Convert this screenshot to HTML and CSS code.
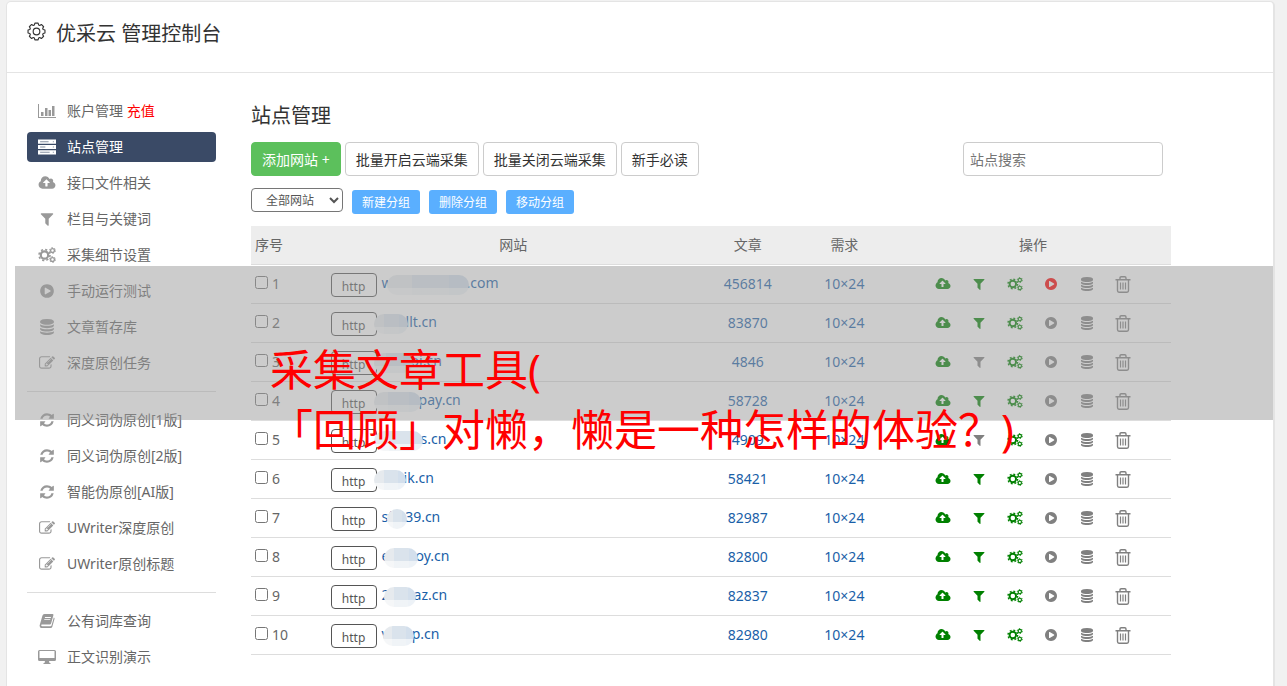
FILE: index.html
```html
<!DOCTYPE html>
<html lang="zh-CN">
<head>
    <meta charset="UTF-8">
    <meta name="viewport" content="width=device-width, initial-scale=1.0">
    <title>优采云 管理控制台</title>
    <link rel="stylesheet" href="styles.css">
</head>
<body>
    <!-- icon sprite -->
    <svg class="sprite" aria-hidden="true">
        <symbol id="i-gear" viewBox="0 0 20 20">
            <path fill="none" stroke="currentColor" stroke-width="1.2" stroke-linejoin="round" d="M8.3 1.2h3.4l.5 1.9 1.2.5 1.7-1 2.4 2.4-1 1.7.5 1.2 1.9.5v3.2l-1.9.5-.5 1.2 1 1.7-2.4 2.4-1.7-1-1.2.5-.5 1.9H8.3l-.5-1.9-1.2-.5-1.7 1L2.500 15l1-1.700-.5-1.200-1.900-.5V8.400l1.900-.5.5-1.200-1-1.700L4.900 2.600l1.700 1 1.200-.5z"/>
            <circle cx="10" cy="10" r="3.500" fill="none" stroke="currentColor" stroke-width="1.200"/>
        </symbol>
        <symbol id="i-chart" viewBox="0 0 18 16">
            <path d="M0 1h1v13h17v1H0zM3 9h2.500v4H3zM7 5h2.500v8H7zM10.500 7H13v6h-2.500zM14 3h2.500v10H14z"/>
        </symbol>
        <symbol id="i-server" viewBox="0 0 17 14">
            <path d="M0 0h17v4H0zM0 5h17v4H0zM0 10h17v4H0z"/>
            <path fill="#3a4a66" opacity=".6" d="M2 1.500h8v1H2zM2 6.500h5v1H2zM2 11.500h9v1H2zM14 1.500h1v1h-1zM14 6.500h1v1h-1zM14 11.500h1v1h-1z"/>
        </symbol>
        <symbol id="i-cloud" viewBox="0 0 2048 1792">
            <path d="M1344 864q0-14-9-23l-352-352q-9-9-23-9t-23 9l-351 351q-10 12-10 24 0 14 9 23t23 9h224v352q0 13 9.500 22.500t22.500 9.500h192q13 0 22.500-9.500t9.500-22.500v-352h224q13 0 22.500-9.500t9.500-22.500zm640 288q0 159-112.500 271.500t-271.500 112.500h-1088q-185 0-316.500-131.500t-131.500-316.500q0-130 70-240t188-165q-2-30-2-43 0-212 150-362t362-150q156 0 285.500 87t188.500 231q71-62 166-62 106 0 181 75t75 181q0 76-41 138 130 31 213.500 135.500t83.500 238.500z"/>
        </symbol>
        <symbol id="i-filter" viewBox="0 0 1792 1792">
            <path d="M1595 295q17 41-14 70l-493 493v742q0 42-39 59-13 5-25 5-27 0-45-19l-256-256q-19-19-19-45v-486l-493-493q-31-29-14-70 17-39 59-39h1280q42 0 59 39z"/>
        </symbol>
        <symbol id="i-cogs" viewBox="0 0 18 16">
            <g fill="none" stroke="currentColor">
                <circle cx="6.500" cy="8" r="3.700" stroke-width="2.200"/>
                <circle cx="6.500" cy="8" r="5.500" stroke-width="1.600" stroke-dasharray="2.160 2.160"/>
                <circle cx="14.500" cy="3.500" r="1.900" stroke-width="1.300"/>
                <circle cx="14.500" cy="3.500" r="2.900" stroke-width="1" stroke-dasharray="1.520 1.520"/>
                <circle cx="14.500" cy="12.500" r="1.900" stroke-width="1.300"/>
                <circle cx="14.500" cy="12.500" r="2.900" stroke-width="1" stroke-dasharray="1.520 1.520"/>
            </g>
        </symbol>
        <symbol id="i-play" viewBox="0 0 1792 1792">
            <path d="M896 128q209 0 385.500 103t279.500 279.500 103 385.500-103 385.500-279.500 279.500-385.500 103-385.500-103-279.500-279.500-103-385.500 103-385.500 279.500-279.500 385.500-103zm384 823q32-18 32-55t-32-55l-544-320q-31-19-64-1-32 19-32 56v640q0 37 32 56 16 8 32 8 17 0 32-9z"/>
        </symbol>
        <symbol id="i-db" viewBox="0 0 1792 1792">
            <path d="M896 768q237 0 443-43t325-127v170q0 69-103 128t-280 93.500-385 34.500-385-34.500-280-93.500-103-128v-170q119 84 325 127t443 43zm0 768q237 0 443-43t325-127v170q0 69-103 128t-280 93.500-385 34.500-385-34.500-280-93.500-103-128v-170q119 84 325 127t443 43zm0-384q237 0 443-43t325-127v170q0 69-103 128t-280 93.500-385 34.500-385-34.500-280-93.500-103-128v-170q119 84 325 127t443 43zm0-1152q208 0 385 34.500t280 93.500 103 128v128q0 69-103 128t-280 93.500-385 34.500-385-34.500-280-93.500-103-128v-128q0-69 103-128t280-93.500 385-34.500z"/>
        </symbol>
        <symbol id="i-edit" viewBox="0 0 1792 1792">
            <path d="M888 1184l116-116-152-152-116 116v56h96v96h56zm440-720q-16-16-33 1l-350 350q-17 17-1 33t33-1l350-350q17-17 1-33zm80 594v190q0 119-84.500 203.500t-203.500 84.500h-832q-119 0-203.500-84.500t-84.500-203.500v-832q0-119 84.500-203.500t203.500-84.500h832q63 0 117 25 15 7 18 23 3 17-9 29l-49 49q-14 14-32 8-23-6-45-6h-832q-66 0-113 47t-47 113v832q0 66 47 113t113 47h832q66 0 113-47t47-113v-126q0-13 9-22l64-64q15-15 35-7t20 29zm-96-738l288 288-672 672h-288v-288zm444 132l-92 92-288-288 92-92q28-28 68-28t68 28l152 152q28 28 28 68t-28 68z"/>
        </symbol>
        <symbol id="i-refresh" viewBox="0 0 1792 1792">
            <path d="M1639 1056q0 5-1 7-64 268-268 434.500t-478 166.500q-146 0-282.500-55t-243.500-157l-129 129q-19 19-45 19t-45-19-19-45v-448q0-26 19-45t45-19h448q26 0 45 19t19 45-19 45l-137 137q71 66 161 102t187 36q134 0 250-65t186-179q11-17 53-117 8-23 30-23h192q13 0 22.500 9.500t9.500 22.500zm25-800v448q0 26-19 45t-45 19h-448q-26 0-45-19t-19-45 19-45l138-138q-148-137-349-137-134 0-250 65t-186 179q-11 17-53 117-8 23-30 23h-199q-13 0-22.500-9.500t-9.500-22.500v-7q65-268 270-434.500t480-166.500q146 0 284 55.500t245 156.500l130-129q19-19 45-19t45 19 19 45z"/>
        </symbol>
        <symbol id="i-book" viewBox="0 0 16 16">
            <path d="M5.500 1h8q1.200 0 .9 1.200l-2.300 8.300q-.3 1-1.400 1H2.500q-.8 1.800.5 1.800h8.500q.7 0 1-.8l2.300-8q1 .3.7 1.400l-2.200 7.800q-.4 1.300-1.700 1.300H2.500Q.5 15 .6 12.500L3.400 2.700Q3.800 1 5.500 1zM6 4l-.2.900h6L12 4zm-.6 2.200-.3.900h6l.3-.9z"/>
        </symbol>
        <symbol id="i-desktop" viewBox="0 0 18 16">
            <path d="M1.500 1h15Q18 1 18 2.500v8q0 1.500-1.500 1.500H11l.5 2h1v1h-7v-1h1l.5-2H1.500Q0 12 0 10.500v-8Q0 1 1.500 1zm0 1v7h15V2z"/>
        </symbol>
        <symbol id="i-trash" viewBox="0 0 16 17">
            <path fill="none" stroke="currentColor" stroke-width="1.400" d="M.5 3.700h15M5 3.500V2q0-1.200 1.200-1.200h3.600Q11 .8 11 2v1.500M2.500 4v10.500q0 1.700 1.500 1.700h8q1.500 0 1.500-1.700V4"/>
            <path fill="none" stroke="currentColor" stroke-width="1.200" d="M5.500 6.500v7M8 6.500v7M10.500 6.500v7"/>
        </symbol>
    </svg>

    <div class="panel">
        <header class="top">
            <svg class="top-icon"><use href="#i-gear"/></svg>
            <h1>优采云 管理控制台</h1>
        </header>

        <div class="main">
            <nav class="sidebar">
                <ul>
                    <li><a href="#"><svg><use href="#i-chart"/></svg><span>账户管理 <em>充值</em></span></a></li>
                    <li><a href="#" class="active"><svg><use href="#i-server"/></svg><span>站点管理</span></a></li>
                    <li><a href="#"><svg><use href="#i-cloud"/></svg><span>接口文件相关</span></a></li>
                    <li><a href="#"><svg><use href="#i-filter"/></svg><span>栏目与关键词</span></a></li>
                    <li><a href="#"><svg><use href="#i-cogs"/></svg><span>采集细节设置</span></a></li>
                    <li><a href="#"><svg><use href="#i-play"/></svg><span>手动运行测试</span></a></li>
                    <li><a href="#"><svg><use href="#i-db"/></svg><span>文章暂存库</span></a></li>
                    <li><a href="#"><svg><use href="#i-edit"/></svg><span>深度原创任务</span></a></li>
                </ul>
                <hr>
                <ul>
                    <li><a href="#"><svg><use href="#i-refresh"/></svg><span>同义词伪原创[1版]</span></a></li>
                    <li><a href="#"><svg><use href="#i-refresh"/></svg><span>同义词伪原创[2版]</span></a></li>
                    <li><a href="#"><svg><use href="#i-refresh"/></svg><span>智能伪原创[AI版]</span></a></li>
                    <li><a href="#"><svg><use href="#i-edit"/></svg><span>UWriter深度原创</span></a></li>
                    <li><a href="#"><svg><use href="#i-edit"/></svg><span>UWriter原创标题</span></a></li>
                </ul>
                <hr>
                <ul>
                    <li><a href="#"><svg><use href="#i-book"/></svg><span>公有词库查询</span></a></li>
                    <li><a href="#"><svg><use href="#i-desktop"/></svg><span>正文识别演示</span></a></li>
                </ul>
            </nav>

            <section class="content">
                <h2>站点管理</h2>
                <div class="toolbar">
                    <button class="btn btn-add">添加网站 +</button>
                    <button class="btn">批量开启云端采集</button>
                    <button class="btn">批量关闭云端采集</button>
                    <button class="btn">新手必读</button>
                    <input class="search" type="text" placeholder="站点搜索" aria-label="站点搜索">
                </div>
                <div class="groups">
                    <select aria-label="网站分组">
                        <option>全部网站</option>
                    </select>
                    <button class="btn-sm">新建分组</button>
                    <button class="btn-sm">删除分组</button>
                    <button class="btn-sm">移动分组</button>
                </div>

                <table class="sites">
                    <colgroup>
                        <col class="c-no"><col class="c-site"><col class="c-art"><col class="c-need"><col class="c-ops">
                    </colgroup>
                    <thead>
                        <tr><th class="left">序号</th><th>网站</th><th>文章</th><th>需求</th><th>操作</th></tr>
                    </thead>
                    <tbody>
                        <tr>
                            <td><label class="no"><input type="checkbox">1</label></td>
                            <td><div class="site"><span class="http">http</span><a href="#">w<i class="mask" style="width:82px"></i>.com</a></div></td>
                            <td class="num">456814</td><td class="num">10×24</td>
                            <td><div class="ops"><button class="on" aria-label="接口"><svg><use href="#i-cloud"/></svg></button><button class="on" aria-label="关键词"><svg><use href="#i-filter"/></svg></button><button class="on" aria-label="设置"><svg><use href="#i-cogs"/></svg></button><button class="run" aria-label="运行"><svg><use href="#i-play"/></svg></button><button aria-label="暂存库"><svg><use href="#i-db"/></svg></button><button class="del" aria-label="删除"><svg><use href="#i-trash"/></svg></button></div></td>
                        </tr>
                        <tr>
                            <td><label class="no"><input type="checkbox">2</label></td>
                            <td><div class="site"><span class="http">http</span><a href="#"><i class="mask start" style="width:34px"></i>llt.cn</a></div></td>
                            <td class="num">83870</td><td class="num">10×24</td>
                            <td><div class="ops"><button class="on" aria-label="接口"><svg><use href="#i-cloud"/></svg></button><button class="on" aria-label="关键词"><svg><use href="#i-filter"/></svg></button><button class="on" aria-label="设置"><svg><use href="#i-cogs"/></svg></button><button aria-label="运行"><svg><use href="#i-play"/></svg></button><button aria-label="暂存库"><svg><use href="#i-db"/></svg></button><button class="del" aria-label="删除"><svg><use href="#i-trash"/></svg></button></div></td>
                        </tr>
                        <tr>
                            <td><label class="no"><input type="checkbox">3</label></td>
                            <td><div class="site"><span class="http">http</span><a href="#"><i class="mask start" style="width:39px"></i>oi.cn</a></div></td>
                            <td class="num">4846</td><td class="num">10×24</td>
                            <td><div class="ops"><button class="on" aria-label="接口"><svg><use href="#i-cloud"/></svg></button><button aria-label="关键词"><svg><use href="#i-filter"/></svg></button><button class="on" aria-label="设置"><svg><use href="#i-cogs"/></svg></button><button aria-label="运行"><svg><use href="#i-play"/></svg></button><button aria-label="暂存库"><svg><use href="#i-db"/></svg></button><button class="del" aria-label="删除"><svg><use href="#i-trash"/></svg></button></div></td>
                        </tr>
                        <tr>
                            <td><label class="no"><input type="checkbox">4</label></td>
                            <td><div class="site"><span class="http">http</span><a href="#"><i class="mask start" style="width:47px"></i>pay.cn</a></div></td>
                            <td class="num">58728</td><td class="num">10×24</td>
                            <td><div class="ops"><button class="on" aria-label="接口"><svg><use href="#i-cloud"/></svg></button><button class="on" aria-label="关键词"><svg><use href="#i-filter"/></svg></button><button class="on" aria-label="设置"><svg><use href="#i-cogs"/></svg></button><button aria-label="运行"><svg><use href="#i-play"/></svg></button><button aria-label="暂存库"><svg><use href="#i-db"/></svg></button><button class="del" aria-label="删除"><svg><use href="#i-trash"/></svg></button></div></td>
                        </tr>
                        <tr>
                            <td><label class="no"><input type="checkbox">5</label></td>
                            <td><div class="site"><span class="http">http</span><a href="#"><i class="mask start" style="width:49px"></i>s.cn</a></div></td>
                            <td class="num">4909</td><td class="num">10×24</td>
                            <td><div class="ops"><button class="on" aria-label="接口"><svg><use href="#i-cloud"/></svg></button><button aria-label="关键词"><svg><use href="#i-filter"/></svg></button><button class="on" aria-label="设置"><svg><use href="#i-cogs"/></svg></button><button aria-label="运行"><svg><use href="#i-play"/></svg></button><button aria-label="暂存库"><svg><use href="#i-db"/></svg></button><button class="del" aria-label="删除"><svg><use href="#i-trash"/></svg></button></div></td>
                        </tr>
                        <tr>
                            <td><label class="no"><input type="checkbox">6</label></td>
                            <td><div class="site"><span class="http">http</span><a href="#"><i class="mask start" style="width:32px"></i>ik.cn</a></div></td>
                            <td class="num">58421</td><td class="num">10×24</td>
                            <td><div class="ops"><button class="on" aria-label="接口"><svg><use href="#i-cloud"/></svg></button><button class="on" aria-label="关键词"><svg><use href="#i-filter"/></svg></button><button class="on" aria-label="设置"><svg><use href="#i-cogs"/></svg></button><button aria-label="运行"><svg><use href="#i-play"/></svg></button><button aria-label="暂存库"><svg><use href="#i-db"/></svg></button><button class="del" aria-label="删除"><svg><use href="#i-trash"/></svg></button></div></td>
                        </tr>
                        <tr>
                            <td><label class="no"><input type="checkbox">7</label></td>
                            <td><div class="site"><span class="http">http</span><a href="#">sf<i class="mask" style="width:20px"></i>39.cn</a></div></td>
                            <td class="num">82987</td><td class="num">10×24</td>
                            <td><div class="ops"><button class="on" aria-label="接口"><svg><use href="#i-cloud"/></svg></button><button class="on" aria-label="关键词"><svg><use href="#i-filter"/></svg></button><button class="on" aria-label="设置"><svg><use href="#i-cogs"/></svg></button><button aria-label="运行"><svg><use href="#i-play"/></svg></button><button aria-label="暂存库"><svg><use href="#i-db"/></svg></button><button class="del" aria-label="删除"><svg><use href="#i-trash"/></svg></button></div></td>
                        </tr>
                        <tr>
                            <td><label class="no"><input type="checkbox">8</label></td>
                            <td><div class="site"><span class="http">http</span><a href="#">e<i class="mask" style="width:34px"></i>oy.cn</a></div></td>
                            <td class="num">82800</td><td class="num">10×24</td>
                            <td><div class="ops"><button class="on" aria-label="接口"><svg><use href="#i-cloud"/></svg></button><button class="on" aria-label="关键词"><svg><use href="#i-filter"/></svg></button><button class="on" aria-label="设置"><svg><use href="#i-cogs"/></svg></button><button aria-label="运行"><svg><use href="#i-play"/></svg></button><button aria-label="暂存库"><svg><use href="#i-db"/></svg></button><button class="del" aria-label="删除"><svg><use href="#i-trash"/></svg></button></div></td>
                        </tr>
                        <tr>
                            <td><label class="no"><input type="checkbox">9</label></td>
                            <td><div class="site"><span class="http">http</span><a href="#">2<i class="mask" style="width:32px"></i>az.cn</a></div></td>
                            <td class="num">82837</td><td class="num">10×24</td>
                            <td><div class="ops"><button class="on" aria-label="接口"><svg><use href="#i-cloud"/></svg></button><button class="on" aria-label="关键词"><svg><use href="#i-filter"/></svg></button><button class="on" aria-label="设置"><svg><use href="#i-cogs"/></svg></button><button aria-label="运行"><svg><use href="#i-play"/></svg></button><button aria-label="暂存库"><svg><use href="#i-db"/></svg></button><button class="del" aria-label="删除"><svg><use href="#i-trash"/></svg></button></div></td>
                        </tr>
                        <tr>
                            <td><label class="no"><input type="checkbox">10</label></td>
                            <td><div class="site"><span class="http">http</span><a href="#">v<i class="mask" style="width:31px"></i>p.cn</a></div></td>
                            <td class="num">82980</td><td class="num">10×24</td>
                            <td><div class="ops"><button class="on" aria-label="接口"><svg><use href="#i-cloud"/></svg></button><button class="on" aria-label="关键词"><svg><use href="#i-filter"/></svg></button><button class="on" aria-label="设置"><svg><use href="#i-cogs"/></svg></button><button aria-label="运行"><svg><use href="#i-play"/></svg></button><button aria-label="暂存库"><svg><use href="#i-db"/></svg></button><button class="del" aria-label="删除"><svg><use href="#i-trash"/></svg></button></div></td>
                        </tr>
                    </tbody>
                </table>
            </section>
        </div>
    </div>

    <div class="caption">
        <p>采集文章工具(<br>「回顾」对懒，懒是一种怎样的体验？)</p>
    </div>
</body>
</html>
```
FILE: styles.css
```css
* {
    box-sizing: border-box;
}
body {
    position: relative;
    margin: 0;
    padding: 1px 12px 0 6px;
    background-color: #f1f1f1;
    color: #666;
    font-family: "Noto Sans", "Noto Sans CJK SC", sans-serif;
    font-size: 14px;
    line-height: 20px;
}
button, input, select {
    font-family: inherit;
}
button {
    cursor: pointer;
}
.sprite {
    display: none;
}
svg {
    fill: currentColor;
}
.panel {
    min-height: calc(100vh - 1px);
    background-color: #fff;
    border: 1px solid #e4e4e4;
    border-right-width: 2px;
    border-bottom: none;
    border-radius: 5px 5px 0 0;
}
.top {
    display: flex;
    gap: 10px;
    height: 71px;
    padding: 17px 20px;
    border-bottom: 1px solid #e4e4e4;
    color: #333;
}
.top-icon {
    width: 19px;
    height: 19px;
    margin-top: 3px;
}
h1, h2 {
    margin: 0;
    color: #333;
    font-size: 20px;
    font-weight: 400;
    line-height: 30px;
}
.main {
    display: flex;
    gap: 35px;
    padding: 23px 102px 0 20px;
}

/* sidebar */
.sidebar {
    flex: 0 0 189px;
}
.sidebar ul {
    margin: 0;
    padding: 0;
    list-style: none;
}
.sidebar li {
    margin-bottom: 6px;
}
.sidebar a {
    display: flex;
    align-items: center;
    gap: 11px;
    height: 30px;
    padding: 0 11px;
    border-radius: 4px;
    color: #666;
    text-decoration: none;
}
.sidebar svg {
    width: 18px;
    height: 16px;
    color: #999;
}
.sidebar em {
    color: #f00;
    font-style: normal;
}
.sidebar .active {
    background-color: #3a4a66;
    color: #fff;
}
.sidebar .active svg {
    color: #fff;
}
.sidebar hr {
    height: 1px;
    margin: 13px 0;
    border: none;
    background-color: #ddd;
}

/* content */
.content {
    flex: 1;
    min-width: 0;
    padding-top: 5px;
}
.toolbar {
    display: flex;
    gap: 4px;
    margin: 11px 8px 12px 0;
}
.btn {
    height: 34px;
    padding: 0 10px;
    border: 1px solid #ccc;
    border-radius: 4px;
    background-color: #fff;
    color: #333;
    font-size: 14px;
}
.btn-add {
    border-color: #5cc05c;
    background-color: #5cc05c;
    color: #fff;
}
.search {
    width: 200px;
    height: 34px;
    margin-left: auto;
    padding: 0 6px;
    border: 1px solid #ccc;
    border-radius: 4px;
    font-size: 14px;
}
.groups {
    display: flex;
    gap: 9px;
    margin-bottom: 12px;
}
.groups select {
    width: 92px;
    height: 24px;
    padding: 0 4px 0 10px;
    border: 1px solid #767676;
    border-radius: 4px;
    background-color: #fff;
    color: #555;
    font-size: 12px;
}
.btn-sm {
    height: 24px;
    margin-top: 2px;
    padding: 0 10px;
    border: none;
    border-radius: 3px;
    background-color: #5aafff;
    color: #fff;
    font-size: 12px;
}

/* site table */
.sites {
    width: 100%;
    table-layout: fixed;
    border-collapse: separate;
    border-spacing: 0;
}
.c-no { width: 8%; }
.c-site { width: 41%; }
.c-art { width: 10%; }
.c-need { width: 11%; }
.c-ops { width: 30%; }
.sites th,
.sites td {
    height: 39px;
    padding: 0 4px;
    border-bottom: 1px solid #ddd;
    font-weight: 400;
}
.sites th {
    background-color: #ededed;
    text-align: center;
}
.sites th.left {
    text-align: left;
}
.no {
    display: flex;
    align-items: center;
    gap: 4px;
}
.no input {
    width: 13px;
    height: 13px;
    margin: 0 0 3px;
}
.sites .num {
    padding: 0;
    color: #1a5fa8;
    text-align: center;
}
.site {
    display: flex;
    align-items: center;
    gap: 5px;
    padding-left: 2px;
}
.http {
    width: 46px;
    height: 24px;
    margin-top: 2px;
    padding-top: 3px;
    border: 1px solid #555;
    border-radius: 4px;
    color: #555;
    font-size: 12px;
    text-align: center;
}
.site a {
    color: #1a5fa8;
    text-decoration: none;
    white-space: nowrap;
}
/* mosaic that hides part of the domain */
.mask {
    position: relative;
    display: inline-block;
    height: 20px;
    margin: 0 -2px 0 -6px;
    border-radius: 10px;
    background:
        linear-gradient(to bottom, transparent 65%, rgba(255, 255, 255, 0.6) 65%),
        linear-gradient(to right, #e6eaee 30%, #dae3ec 30% 75%, #d3dfec 75%);
    vertical-align: -7px;
}
.mask.start {
    margin-left: -8px;
}
.ops {
    display: flex;
    justify-content: center;
}
.ops button {
    display: flex;
    align-items: center;
    justify-content: center;
    width: 36px;
    height: 24px;
    padding: 0;
    border: none;
    background: none;
    color: #808080;
}
.ops svg {
    width: 16px;
    height: 14px;
}
.ops .del svg {
    height: 17px;
}
.ops .on {
    color: #008000;
}
.ops .run {
    color: #f00;
}

/* caption band laid over the page */
.caption {
    position: absolute;
    top: 266px;
    left: 15px;
    right: 14px;
    height: 154px;
    padding: 74px 0 0 255px;
    background-color: rgba(153, 153, 153, 0.5);
    pointer-events: none;
}
.caption p {
    margin: 0;
    color: #f00;
    font-size: 43px;
    line-height: 60px;
    white-space: nowrap;
}
```
